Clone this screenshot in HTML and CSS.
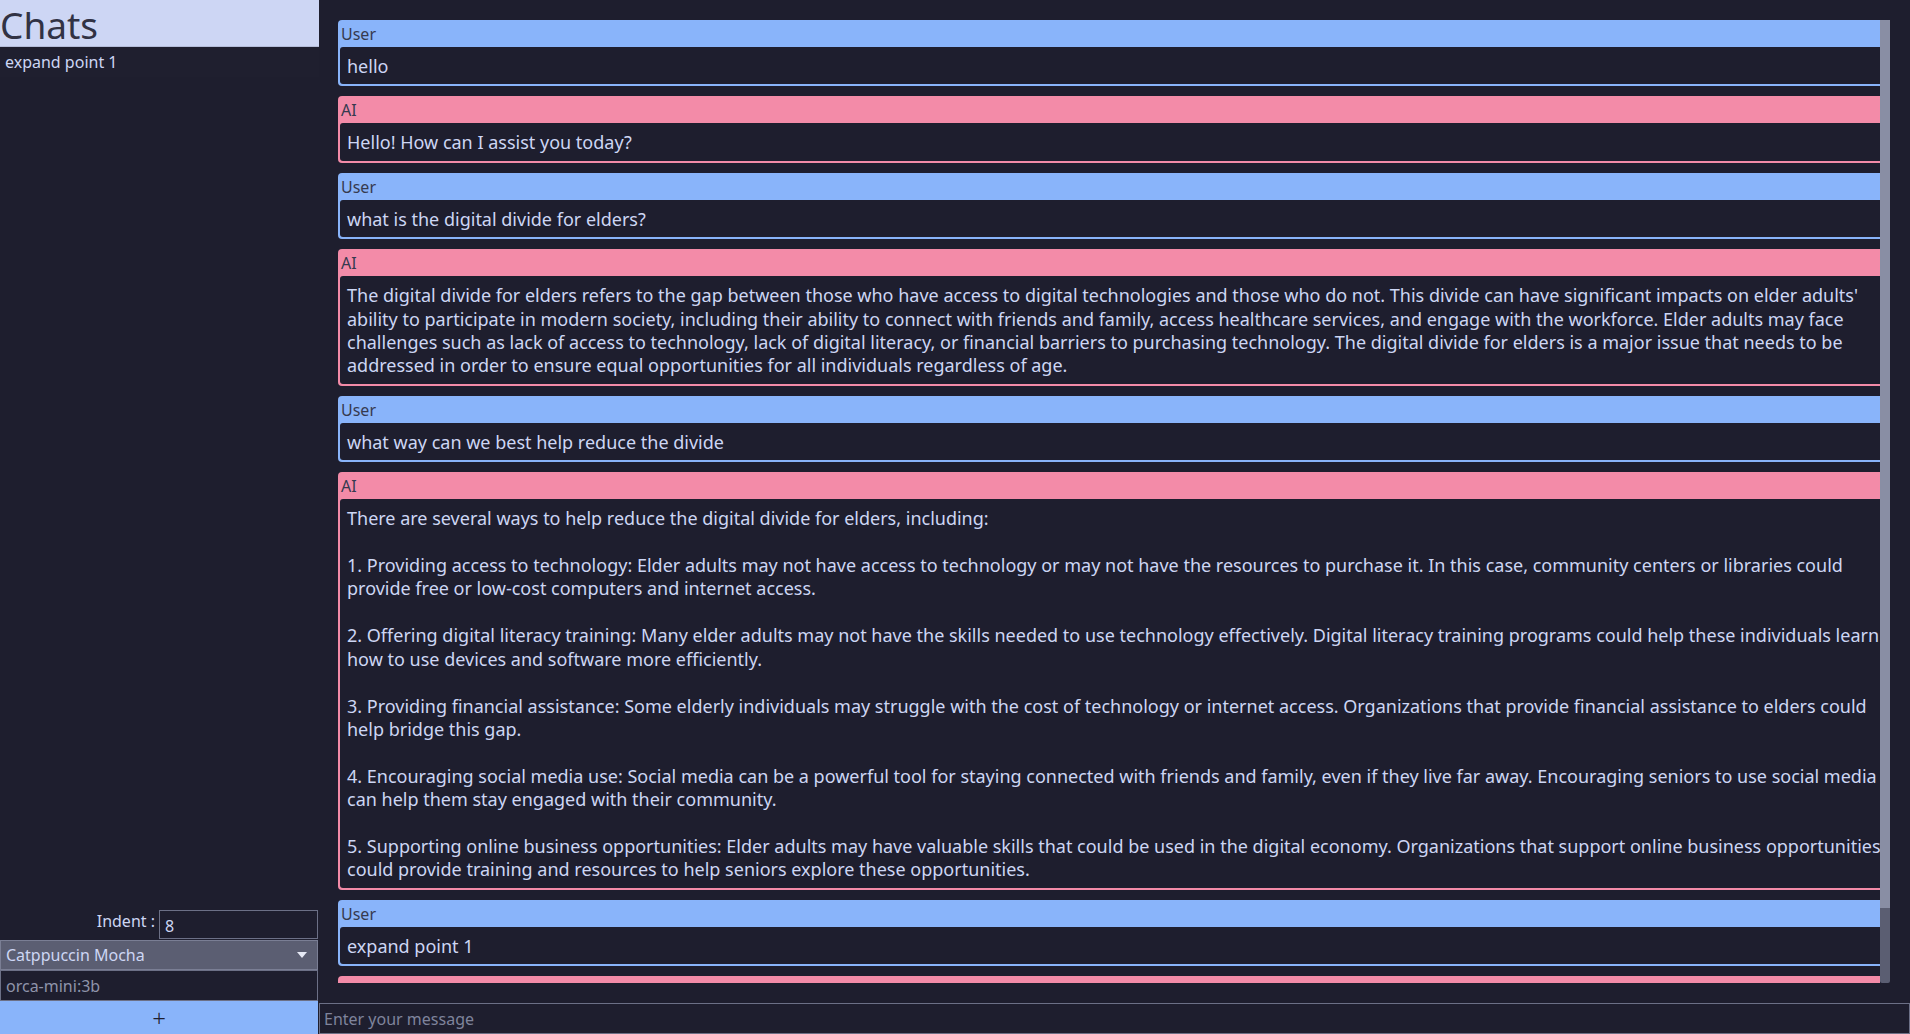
FILE: index.html
```html
<!DOCTYPE html>
<html lang="en">
<head>
<meta charset="utf-8">
<title>Chats</title>
<link rel="stylesheet" href="styles.css">
</head>
<body>
<div class="app">
  <aside class="sidebar">
    <div class="sidebar-title">Chats</div>
    <ul class="chat-list">
      <li class="chat-item">expand point 1</li>
    </ul>
    <div class="sidebar-controls">
      <div class="indent-row">
        <span class="indent-label">Indent :</span>
        <div class="field indent-field">8</div>
      </div>
      <div class="theme-select">
        <span>Catppuccin Mocha</span>
        <svg class="select-arrow" width="10" height="6" viewBox="0 0 10 6"><path d="M0 0 H10 L5 6 Z" fill="#e6e9f5"/></svg>
      </div>
      <div class="field model-field">orca-mini:3b</div>
      <button class="new-chat">+</button>
    </div>
  </aside>
  <main class="main">
    <div class="chat-frame">
      <div class="chat-scroll">
        <div class="messages">
          <div class="msg user">
            <div class="msg-role">User</div>
            <div class="msg-body">hello</div>
          </div>
          <div class="msg ai">
            <div class="msg-role">AI</div>
            <div class="msg-body">Hello! How can I assist you today?</div>
          </div>
          <div class="msg user">
            <div class="msg-role">User</div>
            <div class="msg-body">what is the digital divide for elders?</div>
          </div>
          <div class="msg ai">
            <div class="msg-role">AI</div>
            <div class="msg-body">The digital divide for elders refers to the gap between those who have access to digital technologies and those who do not. This divide can have significant impacts on elder adults' ability to participate in modern society, including their ability to connect with friends and family, access healthcare services, and engage with the workforce. Elder adults may face challenges such as lack of access to technology, lack of digital literacy, or financial barriers to purchasing technology. The digital divide for elders is a major issue that needs to be addressed in order to ensure equal opportunities for all individuals regardless of age.</div>
          </div>
          <div class="msg user">
            <div class="msg-role">User</div>
            <div class="msg-body">what way can we best help reduce the divide</div>
          </div>
          <div class="msg ai">
            <div class="msg-role">AI</div>
            <div class="msg-body">There are several ways to help reduce the digital divide for elders, including:

1. Providing access to technology: Elder adults may not have access to technology or may not have the resources to purchase it. In this case, community centers or libraries could provide free or low-cost computers and internet access.

2. Offering digital literacy training: Many elder adults may not have the skills needed to use technology effectively. Digital literacy training programs could help these individuals learn how to use devices and software more efficiently.

3. Providing financial assistance: Some elderly individuals may struggle with the cost of technology or internet access. Organizations that provide financial assistance to elders could help bridge this gap.

4. Encouraging social media use: Social media can be a powerful tool for staying connected with friends and family, even if they live far away. Encouraging seniors to use social media can help them stay engaged with their community.

5. Supporting online business opportunities: Elder adults may have valuable skills that could be used in the digital economy. Organizations that support online business opportunities could provide training and resources to help seniors explore these opportunities.</div>
          </div>
          <div class="msg user">
            <div class="msg-role">User</div>
            <div class="msg-body">expand point 1</div>
          </div>
          <div class="msg ai">
            <div class="msg-role">AI</div>
            <div class="msg-body msg-pending"></div>
          </div>
        </div>
      </div>
      <div class="scrollbar"><div class="scroll-thumb"></div></div>
    </div>
    <div class="message-input">Enter your message</div>
  </main>
</div>
</body>
</html>
```

FILE: styles.css
```css
* { box-sizing: border-box; }

html, body {
  margin: 0;
  padding: 0;
  height: 100%;
  background: #1e1e2e;
  font-family: "Noto Sans", "DejaVu Sans", sans-serif;
  color: #cdd6f4;
}

.app {
  display: flex;
  height: 1034px;
  width: 1910px;
  overflow: hidden;
}

/* Sidebar */
.sidebar {
  width: 319px;
  flex: none;
  display: flex;
  flex-direction: column;
  background: #1e1e2e;
}

.sidebar-title {
  height: 47px;
  background: #cdd6f4;
  color: #313244;
  font-size: 37px;
  line-height: 50px;
  padding-left: 0;
  border-bottom: 1px solid #b4bcd8;
  overflow: visible;
}

.chat-list {
  list-style: none;
  margin: 0;
  padding: 0;
  flex: 1;
}

.chat-item {
  height: 30px;
  padding: 4px 5px 0;
  font-size: 16px;
  line-height: 22px;
  color: #cdd6f4;
  background: #1f1f2f;
}

.sidebar-controls {
  display: flex;
  flex-direction: column;
}

.indent-row {
  display: flex;
  justify-content: flex-end;
  align-items: center;
  gap: 4px;
  height: 30px;
  padding-right: 1px;
  margin-top: -1px;
  margin-bottom: 1px;
}

.indent-label {
  font-size: 16px;
  line-height: 22px;
  padding-bottom: 6px;
}

.field {
  background: #1e1e2e;
  border: 1px solid #6c7086;
  font-size: 16px;
  line-height: 22px;
}

.indent-field {
  width: 159px;
  height: 29px;
  padding: 4px 0 0 5px;
  color: #cdd6f4;
}

.theme-select {
  height: 30px;
  margin-right: 1px;
  background: #5b5e72;
  border: 1px solid #7a7e94;
  display: flex;
  align-items: center;
  justify-content: space-between;
  padding: 0 10px 0 5px;
  font-size: 16px;
  color: #cdd6f4;
}

.select-arrow { display: block; }

.model-field {
  height: 31px;
  margin-right: 1px;
  padding: 4px 5px 0;
  color: #8f94aa;
}

.new-chat {
  height: 33px;
  margin: 0 1px 0 0;
  border: none;
  background: #89b4fa;
  color: #1e1e2e;
  font-family: "Noto Sans", sans-serif;
  font-size: 24px;
  font-weight: 300;
  line-height: 33px;
  padding: 0;
}

/* Main */
.main {
  flex: 1;
  display: flex;
  flex-direction: column;
  min-width: 0;
}

.chat-frame {
  flex: 1;
  min-height: 0;
  margin: 20px 20px 20px 19px;
  display: flex;
}

.chat-scroll {
  flex: 1;
  min-width: 0;
  overflow: hidden;
}

.messages {
  display: flex;
  flex-direction: column;
  gap: 10px;
  width: 1563px;
}

.msg {
  border-radius: 4px;
  padding: 0 2px 2px 2px;
}

.msg.user { background: #89b4fa; }
.msg.ai { background: #f38ba8; }

.msg-role {
  height: 27px;
  padding: 2px 0 0 1px;
  font-size: 16px;
  line-height: 24px;
  color: #363a4f;
}

.msg-body {
  background: #1e1e2e;
  border-radius: 3px;
  padding: 8px 7px 6px;
  font-size: 18px;
  line-height: 23.4px;
  white-space: pre-wrap;
  color: #cdd6f4;
}

.msg-pending {
  min-height: 37px;
}

.scrollbar {
  width: 10px;
  flex: none;
  background: #5b5e72;
  border-radius: 0 0 2px 2px;
  display: flex;
  flex-direction: column;
}

.scroll-thumb {
  height: 888px;
  background: #898ea4;
}

.message-input {
  height: 31px;
  flex: none;
  border: 1px solid #6c7086;
  background: #1e1e2e;
  color: #7f849c;
  font-size: 16px;
  line-height: 22px;
  padding: 4px 4px 0;
}
```
